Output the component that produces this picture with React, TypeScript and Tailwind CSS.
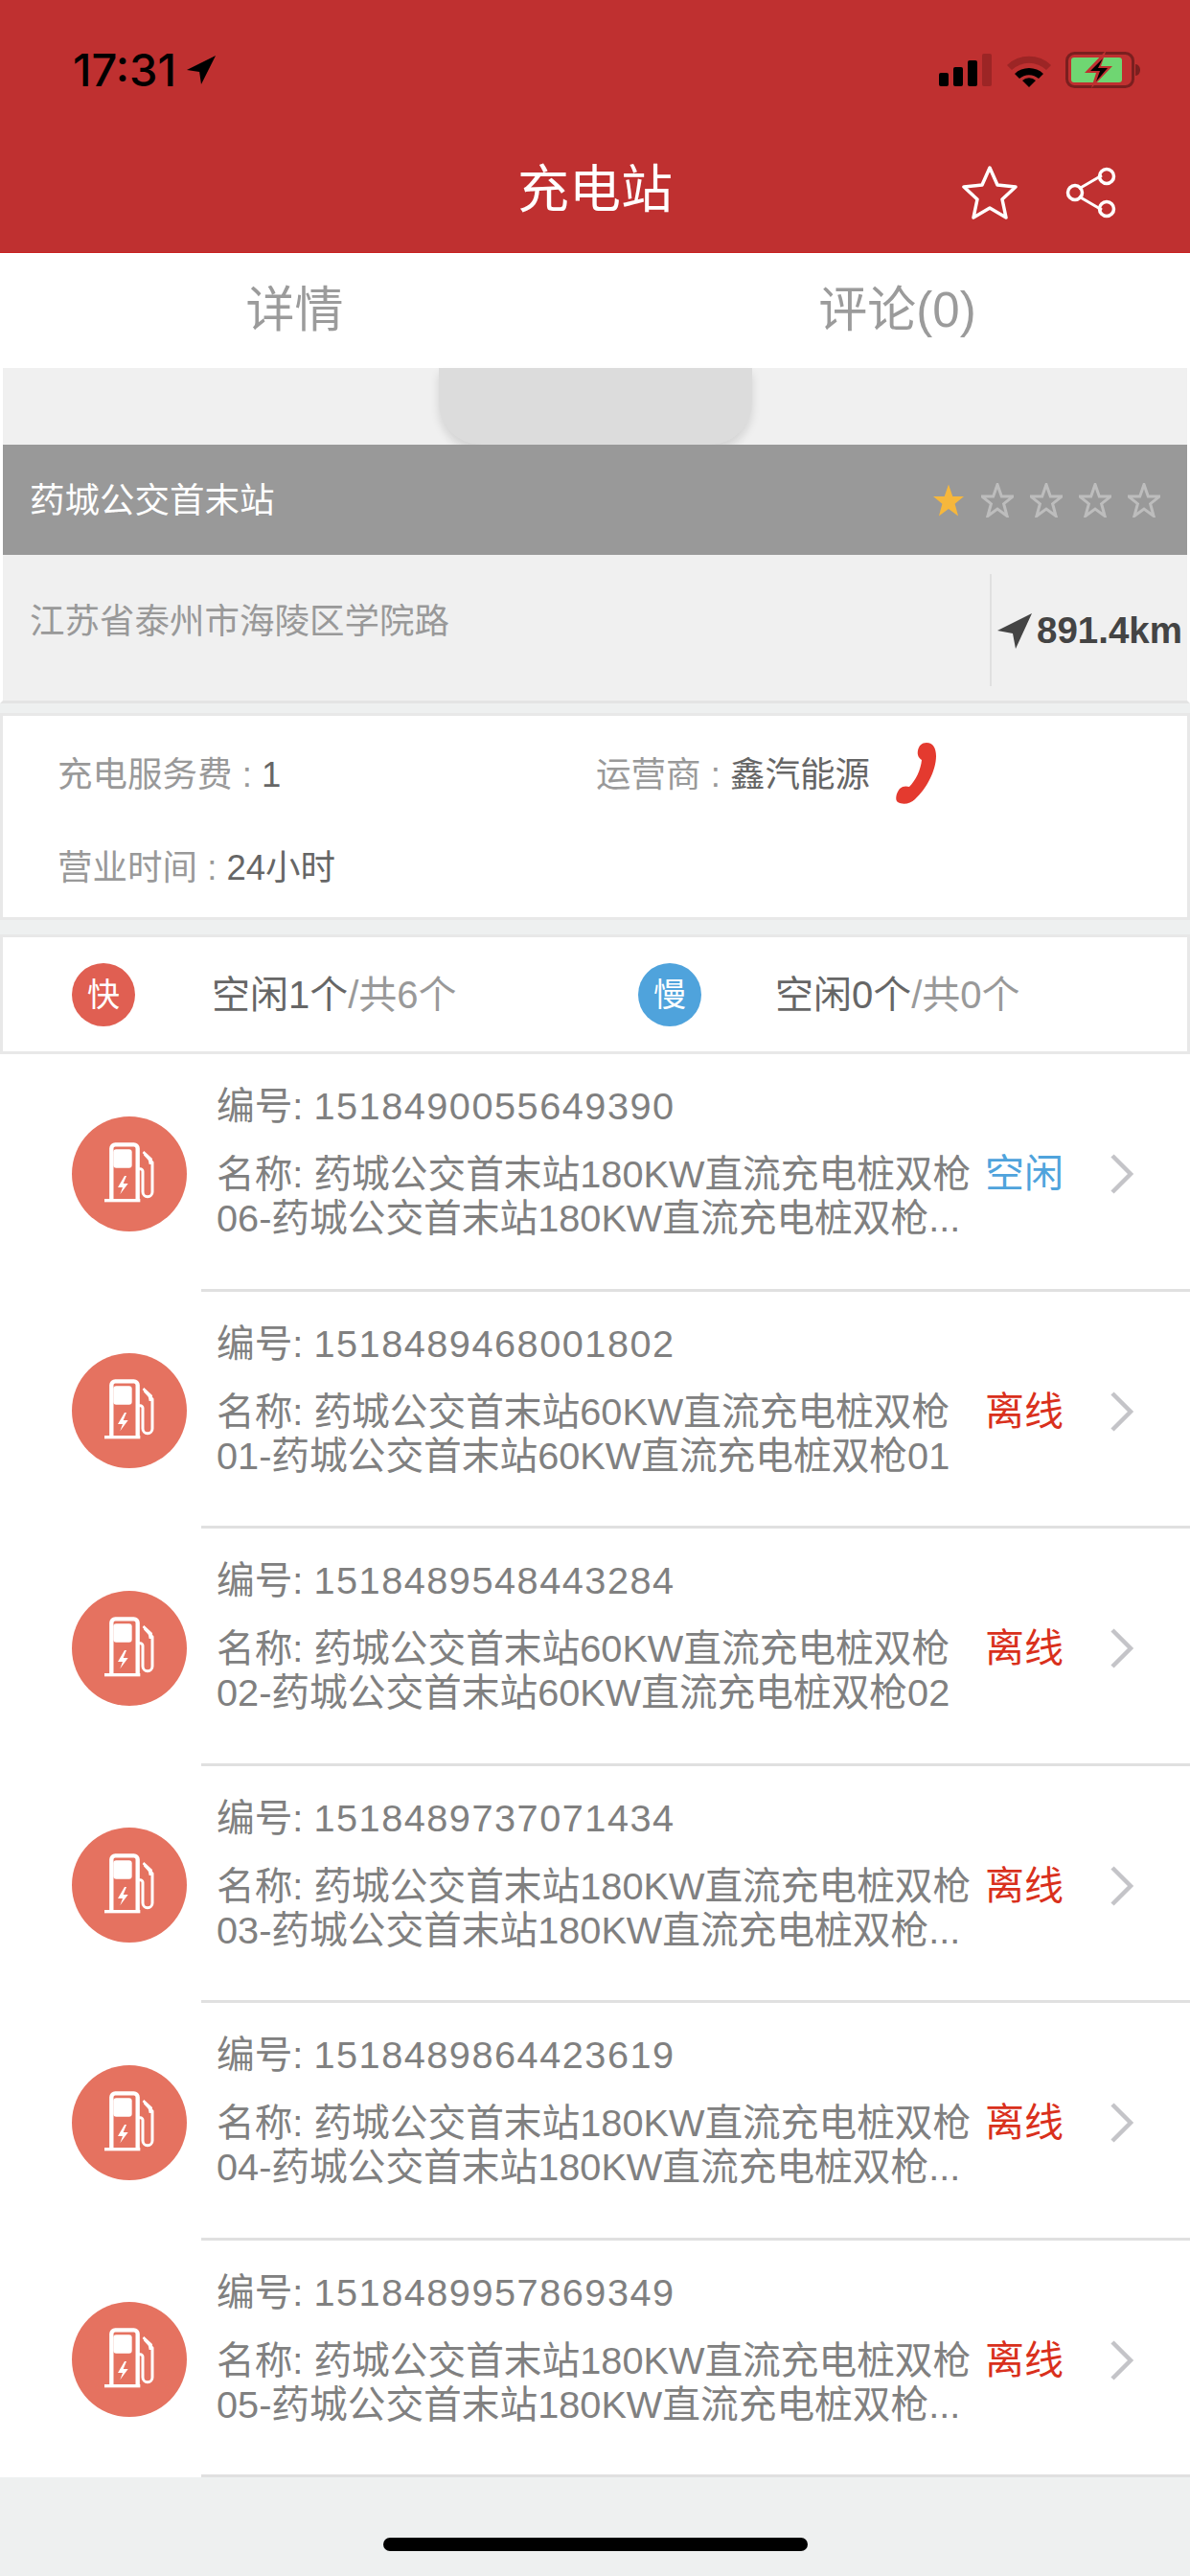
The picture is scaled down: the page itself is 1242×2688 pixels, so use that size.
const rows = [
  { code: "1518490055649390", line1: "名称: 药城公交首末站180KW直流充电桩双枪", line2: "06-药城公交首末站180KW直流充电桩双枪...", free: true },
  { code: "1518489468001802", line1: "名称: 药城公交首末站60KW直流充电桩双枪", line2: "01-药城公交首末站60KW直流充电桩双枪01", free: false },
  { code: "1518489548443284", line1: "名称: 药城公交首末站60KW直流充电桩双枪", line2: "02-药城公交首末站60KW直流充电桩双枪02", free: false },
  { code: "1518489737071434", line1: "名称: 药城公交首末站180KW直流充电桩双枪", line2: "03-药城公交首末站180KW直流充电桩双枪...", free: false },
  { code: "1518489864423619", line1: "名称: 药城公交首末站180KW直流充电桩双枪", line2: "04-药城公交首末站180KW直流充电桩双枪...", free: false },
  { code: "1518489957869349", line1: "名称: 药城公交首末站180KW直流充电桩双枪", line2: "05-药城公交首末站180KW直流充电桩双枪...", free: false },
];

function PumpIcon() {
  return (
    <svg width="120" height="120" viewBox="0 0 360 360" className="shrink-0">
      <circle cx="180" cy="180" r="180" fill="#e57260" />
      <path d="M124 258V100a12 12 0 0 1 12-12h58a12 12 0 0 1 12 12v158" fill="none" stroke="#fff" strokeWidth="13" />
      <rect x="130" y="103" width="58" height="58" rx="9" fill="#fff" />
      <rect x="102" y="258" width="112" height="10" fill="#fff" />
      <path d="M165 186l-21 36h15l-8 22 25-34h-15l10-24z" fill="#fff" />
      <path d="M206 164h8a8 8 0 0 1 8 8v64a15 15 0 0 0 30 0v-92l-24-26" fill="none" stroke="#fff" strokeWidth="9" />
      <path d="M226 108l26 24v18h-10l-3-16-18-20z" fill="#fff" />
    </svg>
  );
}

function Star({ on }: { on: boolean }) {
  const d = "M17 1l4.3 12.6H33l-9.4 7.6 3.5 12.8L17 26.6 6.9 34l3.5-12.8L1 13.6h11.7z";
  return (
    <svg width="34" height="36" viewBox="0 0 34 35">
      {on ? (
        <path d={d} fill="#f6b73c" />
      ) : (
        <path d={d} fill="none" stroke="#bdbdbd" strokeWidth="3" />
      )}
    </svg>
  );
}

function StatusBar() {
  return (
    <div className="flex h-[100px] items-end justify-between pl-[76px] pr-[51px]">
      <div className="flex items-center gap-[10px] text-[47px] leading-[54px] font-medium text-black">
        <span className="[font-family:Inter,sans-serif]">17:31</span>
        <svg width="32" height="32" viewBox="0 0 34 34">
          <path d="M33 1L1 17l14 2 2 14z" fill="#000" />
        </svg>
      </div>
      <div className="flex items-center gap-[13px] pb-[8px]">
        <svg width="56" height="36" viewBox="0 0 56 36">
          <rect x="0" y="21" width="10" height="14" rx="2" fill="#000" />
          <rect x="15" y="15" width="10" height="20" rx="2" fill="#000" />
          <rect x="30" y="8" width="10" height="27" rx="2" fill="#000" />
          <rect x="45" y="1" width="10" height="34" rx="2" fill="#9c2525" />
        </svg>
        <svg width="50" height="37" viewBox="0 0 50 37">
          <path d="M2 13a33 33 0 0 1 46 0l-5 5a26 26 0 0 0-36 0z" fill="#9c2525" />
          <path d="M10 22a22 22 0 0 1 30 0l-5 5a15 15 0 0 0-20 0z" fill="#000" />
          <path d="M18 29a10 10 0 0 1 14 0l-7 7z" fill="#000" />
        </svg>
        <svg width="79" height="38" viewBox="0 0 79 38">
          <rect x="1.5" y="1.5" width="69" height="35" rx="8" fill="none" stroke="#7a1f1f" strokeWidth="3" />
          <rect x="6" y="6" width="53" height="26" rx="3" fill="#6fd672" />
          <path d="M73 13c3 0 5 3 5 6s-2 6-5 6z" fill="#7a1f1f" />
          <path d="M41 0L20 22h12l-5 16 22-23H37l5-15z" fill="#bf3030" />
          <path d="M39 7L26 20h10l-4 11 12-14H34z" fill="#000" />
        </svg>
      </div>
    </div>
  );
}

function Header() {
  return (
    <header className="h-[264px] shrink-0 bg-[#bf3030] border-b-[1px] border-[#c81e1e]">
      <StatusBar />
      <div className="grid h-[80px] mt-[58px] grid-cols-3 items-center">
        <div />
        <div className="text-center text-[54px] leading-[64px] text-white">充电站</div>
        <div className="flex items-center justify-end gap-[49px] pr-[76px] pt-[5px]">
          <svg width="60" height="58" viewBox="0 0 60 58">
            <path d="M30 3l8 18 19 2-14 13 4 19-17-10-17 10 4-19L3 23l19-2z" fill="none" stroke="#fff" strokeWidth="3.5" strokeLinejoin="round" />
          </svg>
          <svg width="54" height="54" viewBox="0 0 54 54">
            <path d="M14 23l24-14M14 31l24 14" stroke="#fff" strokeWidth="3" />
            <circle cx="10" cy="27" r="7.5" fill="none" stroke="#fff" strokeWidth="3.5" />
            <circle cx="43" cy="10" r="7.5" fill="none" stroke="#fff" strokeWidth="3.5" />
            <circle cx="43" cy="44" r="7.5" fill="none" stroke="#fff" strokeWidth="3.5" />
          </svg>
        </div>
      </div>
    </header>
  );
}

function Row({ item }: { item: (typeof rows)[number] }) {
  return (
    <div className="flex h-[247.5px] shrink-0">
      <div className="flex w-[210px] shrink-0 items-center pl-[75px] pt-[2px]">
        <PumpIcon />
      </div>
      <div className="flex flex-1 items-center border-b-[3px] border-[#e0e0e0] pl-[16px]">
        <div className="w-[802px] shrink-0 self-start whitespace-nowrap pt-[31px] text-[39.7px] leading-[46px] text-[#808080]">
          <div>
            编号: <span className="tracking-[1.5px]">{item.code}</span>
          </div>
          <div className="mt-[25px]">{item.line1}</div>
          <div>{item.line2}</div>
        </div>
        <div className={"w-[130px] shrink-0 self-start pt-[102px] text-[41px] leading-[46px] " + (item.free ? "text-[#4fa3dc]" : "text-[#d9301c]")}>
          {item.free ? "空闲" : "离线"}
        </div>
        <svg width="26" height="42" viewBox="0 0 26 42" className="shrink-0 self-start mt-[104px]">
          <path d="M3 2l19 19L3 40" fill="none" stroke="#c4c4c8" strokeWidth="4.5" />
        </svg>
      </div>
    </div>
  );
}

export default function App() {
  return (
    <div className="flex h-[2688px] w-[1242px] flex-col overflow-hidden bg-[#eef0f0] [font-family:'Liberation_Sans','Noto_Sans_CJK_SC',sans-serif]">
      <Header />

      {/* tabs */}
      <div className="grid h-[120px] shrink-0 grid-cols-2 items-center bg-white text-center text-[51px] leading-[60px] text-[#9b9b9b]">
        <div className="pr-[6px]">详情</div>
        <div className="pl-[10px]">评论(0)</div>
      </div>

      {/* station summary */}
      <div className="shrink-0 border-x-[3px] border-white bg-[#f0f0f0] border-b-[3px] border-b-[#e4e4e4]">
        <div className="flex h-[80px] justify-center">
          <div className="h-[80px] w-[327px] rounded-b-[44px] bg-[#dcdcdc] shadow-[0_6px_10px_rgba(0,0,0,0.12)]" />
        </div>
        <div className="relative flex h-[115px] items-center justify-between bg-[#999999] pl-[28px] pr-[28px]">
          <span className="pt-[3px] text-[36.5px] leading-[44px] text-white">药城公交首末站</span>
          <div className="flex gap-[17px]">
            <Star on />
            <Star on={false} />
            <Star on={false} />
            <Star on={false} />
            <Star on={false} />
          </div>
        </div>
        <div className="flex h-[152px] items-start">
          <div className="w-[1030px] shrink-0 pl-[28px] pt-[48px] text-[36.5px] leading-[44px] text-[#999999]">江苏省泰州市海陵区学院路</div>
          <div className="mt-[20px] flex h-[117px] flex-1 items-center gap-[4px] border-l-[2px] border-[#e0e0e0] pl-[5px]">
            <svg width="38" height="38" viewBox="0 0 38 38" className="shrink-0">
              <path d="M37 1L1 19l16 3 3 16z" fill="#444" />
            </svg>
            <span className="text-[38.5px] leading-[40px] font-bold text-[#444]">891.4km</span>
          </div>
        </div>
      </div>

      {/* info card */}
      <div className="mt-[10px] flex h-[216px] shrink-0 flex-col border-[3px] border-[#e8e8e8] bg-white pl-[57px]">
        <div className="mt-[31px] flex h-[62px] items-center text-[36.5px] leading-[40px] text-[#999999]">
          <div className="w-[562px] shrink-0">
            充电服务费 : <span className="text-[#666]">1</span>
          </div>
          <div>
            运营商 : <span className="text-[#666]">鑫汽能源</span>
          </div>
          <svg width="46" height="66" viewBox="0 0 46 66" className="ml-[26px] mt-[-4px] shrink-0">
            <path d="M33 1c7 0 10 6 10 14 0 15-10 34-22 45-5 5-13 6-18 3-3-2-2-9 2-14 3-3 7-3 10-2 7-7 12-18 13-28-3-2-5-5-4-10 1-5 4-8 9-8z" fill="#e43a2f" />
          </svg>
        </div>
        <div className="mt-[46px] text-[36.5px] leading-[40px] text-[#999999]">
          营业时间 : <span className="text-[#666]">24小时</span>
        </div>
      </div>

      {/* pile counts */}
      <div className="mt-[15px] flex h-[125px] shrink-0 items-center border-[3px] border-[#e8e8e8] bg-white pl-[72px] text-[40px] leading-[46px]">
        <div className="flex h-[66px] w-[66px] shrink-0 items-center justify-center rounded-full bg-[#e05f52] text-[34px] text-white">快</div>
        <div className="ml-[80px] w-[445px] shrink-0 text-[#666]">
          空闲1个<span className="text-[#999]">/共6个</span>
        </div>
        <div className="flex h-[66px] w-[66px] shrink-0 items-center justify-center rounded-full bg-[#4fa3dc] text-[34px] text-white">慢</div>
        <div className="ml-[77px] text-[#666]">
          空闲0个<span className="text-[#999]">/共0个</span>
        </div>
      </div>

      {/* pile list */}
      <div className="flex shrink-0 flex-col bg-white">
        {rows.map((item) => (
          <Row key={item.code} item={item} />
        ))}
      </div>

      {/* home indicator */}
      <div className="flex flex-1 justify-center pt-[63px]">
        <div className="h-[14px] w-[443px] rounded-full bg-black" />
      </div>
    </div>
  );
}
